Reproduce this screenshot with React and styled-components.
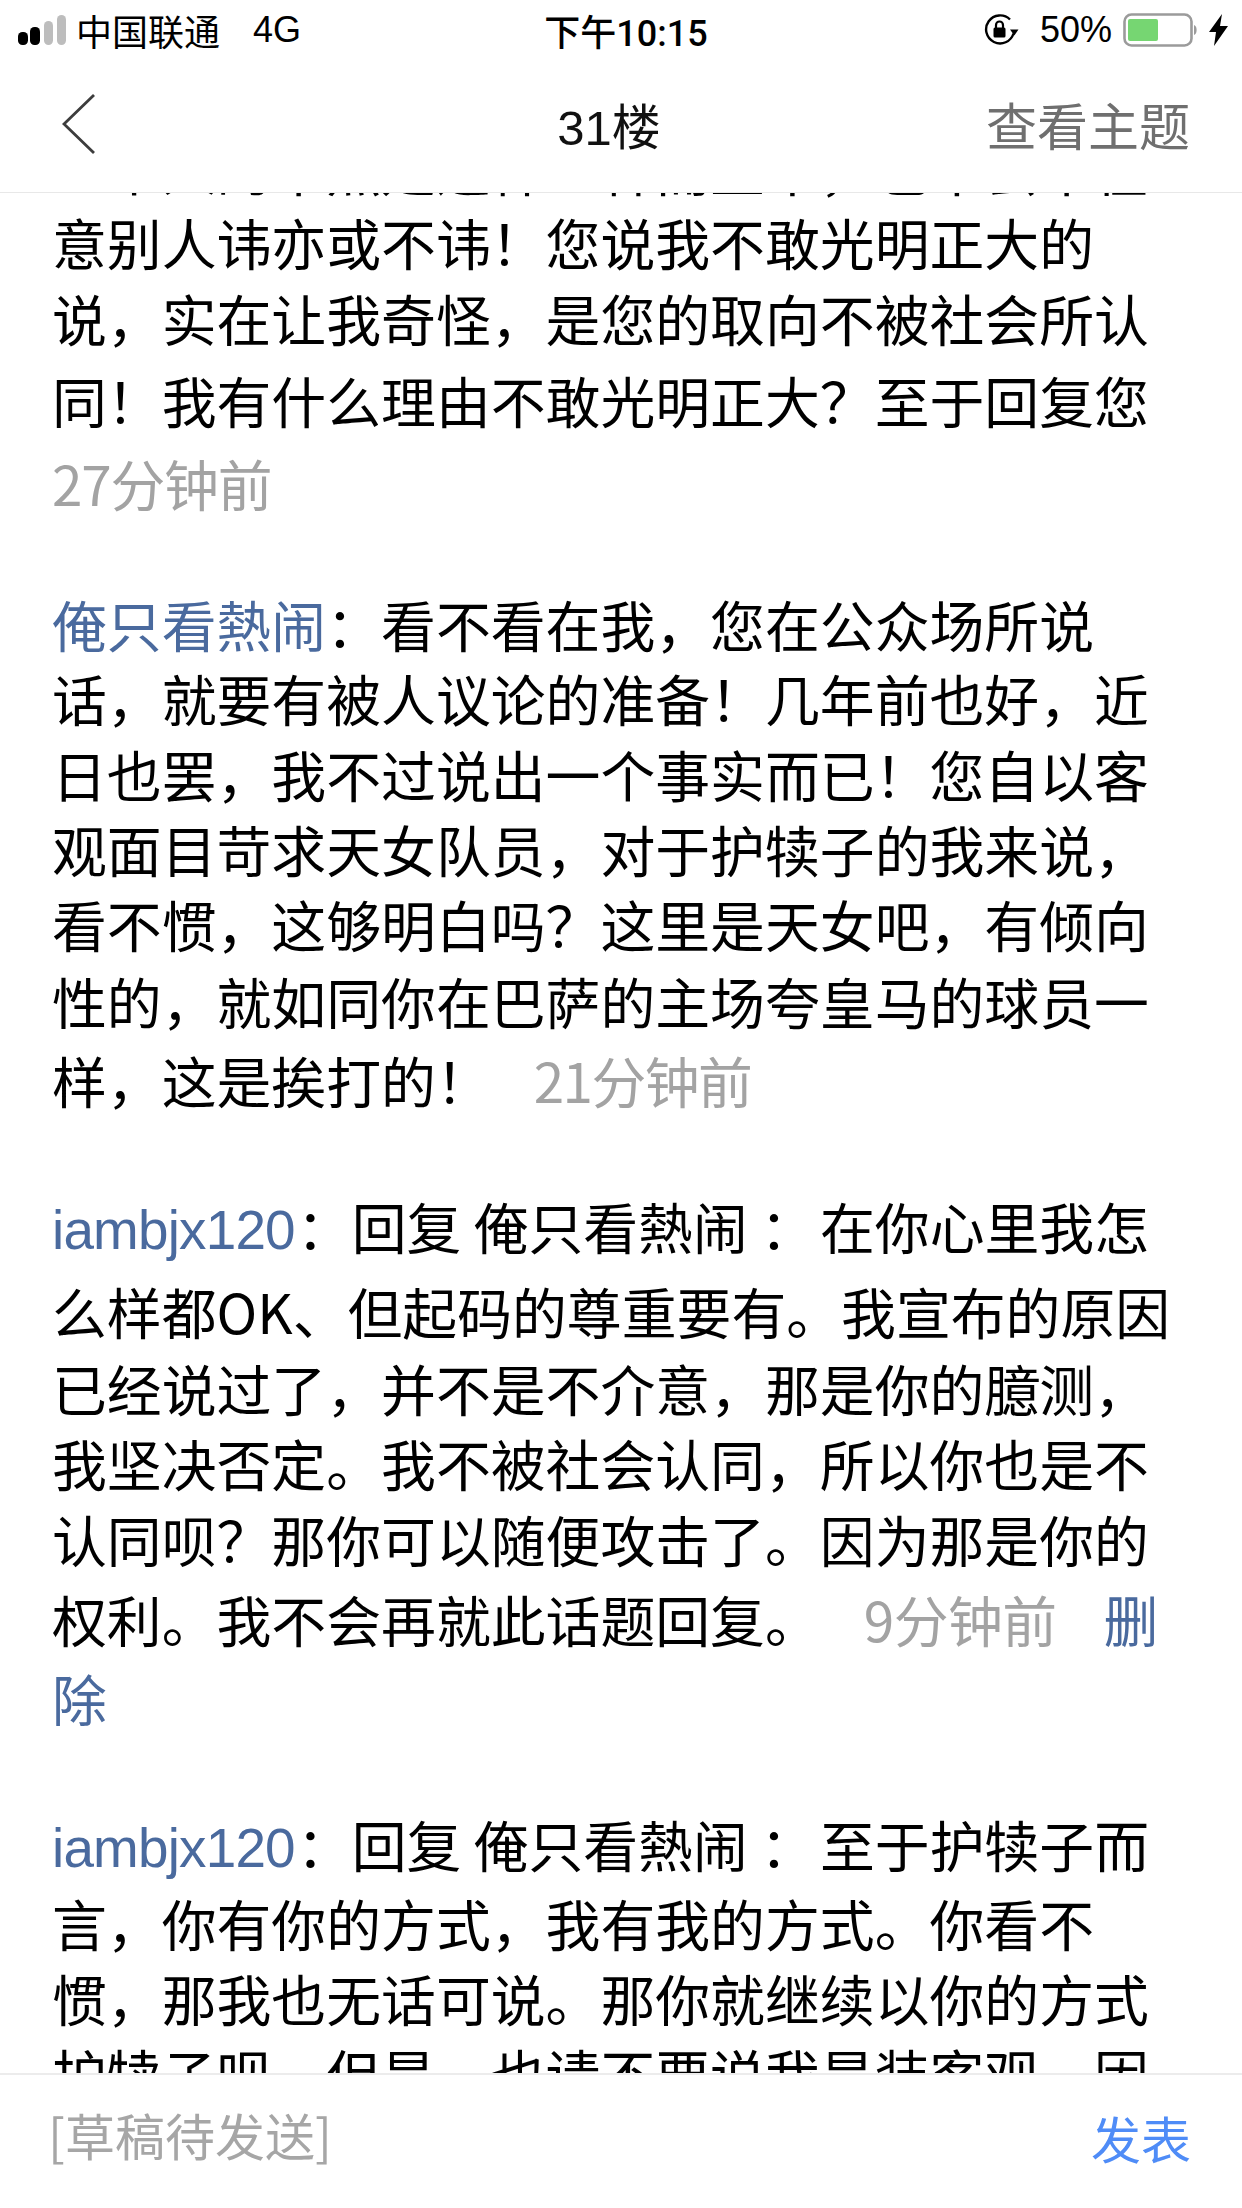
import React from 'react';
import styled, { createGlobalStyle } from 'styled-components';

const CJK = '"Noto Sans CJK SC", "Liberation Sans", sans-serif';
const LATIN = '"Liberation Sans", "Noto Sans CJK SC", sans-serif';

const GlobalStyle = createGlobalStyle`
  html, body {
    margin: 0;
    padding: 0;
    background: #fff;
  }
`;

const Page = styled.div`
  width: 1242px;
  height: 2208px;
  display: flex;
  flex-direction: column;
  overflow: hidden;
  background: #fff;
  color: #000;
  font-family: ${LATIN};
`;

const StatusBar = styled.div`
  height: 60px;
  flex: none;
  display: grid;
  grid-template-columns: 1fr auto 1fr;
  align-items: center;
  padding: 0 14px 0 18px;
  font-size: 36px;
`;

const StatusLeft = styled.div`
  display: flex;
  align-items: center;
  gap: 10px;
`;

const Carrier = styled.span`
  margin-right: 23px;
`;

const StatusRight = styled.div`
  display: flex;
  align-items: center;
  justify-content: flex-end;
`;

const Time = styled.span`
  font-family: Roboto, "Noto Sans CJK SC", sans-serif;
  font-weight: 500;
  margin-left: 6px;
`;

const Percent = styled.span`
  margin: 0 11px 0 21px;
`;

const NavBar = styled.div`
  height: 133px;
  flex: none;
  display: grid;
  grid-template-columns: 1fr auto 1fr;
  align-items: center;
  padding: 0 52px 5px 62px;
  box-sizing: border-box;
  border-bottom: 1px solid #e8e8e8;
`;

const NavTitle = styled.div`
  font-size: 49px;
  color: #111;
  margin-right: 34px;
`;

const NavAction = styled.div`
  justify-self: end;
  font-size: 51px;
  font-family: ${CJK};
  color: #6f6f6f;
`;

const Content = styled.div`
  flex: 1;
  min-height: 0;
  overflow: hidden;
  padding: 0 52px;
`;

const Thread = styled.div`
  margin-top: ${(p) => p.$top}px;
  font-size: 54.85px;
  font-family: ${CJK};
`;

const Line = styled.div`
  height: 76px;
  line-height: 76px;
  margin-top: ${(p) => p.$mt || 0}px;
  white-space: nowrap;
`;

const Author = styled.span`
  font-family: ${(p) => (p.$latin ? LATIN : CJK)};
  letter-spacing: ${(p) => (p.$latin ? '-0.8px' : '0')};
  margin-right: ${(p) => (p.$latin ? '2px' : '0')};
  color: #4a6a9e;
`;

const Mention = styled.span`
  margin-right: 5px;
`;

const Stamp = styled.span`
  color: #a3a3a3;
  letter-spacing: ${(p) => p.$ls ?? -1.2}px;
  margin-left: ${(p) => p.$gap || 0}px;
`;

const Remove = styled.span`
  color: #4a6a9e;
  margin-left: ${(p) => p.$gap || 0}px;
`;

const Footer = styled.div`
  height: 135px;
  flex: none;
  box-sizing: border-box;
  display: flex;
  align-items: center;
  justify-content: space-between;
  padding: 0 51px 10px 48px;
  border-top: 2px solid #ececec;
  font-family: ${CJK};
  font-size: 50px;
`;

const Draft = styled.span`
  color: #a6a6a6;
  margin-bottom: 5px;
`;

const Publish = styled.span`
  color: #4f8cf7;
`;

const Signal = () => (
  <svg width="48" height="30" viewBox="0 0 48 30">
    <rect x="0" y="17" width="10" height="13" rx="4.5" fill="#000" />
    <rect x="12" y="12" width="10" height="18" rx="4.5" fill="#000" />
    <rect x="26" y="6" width="9" height="24" rx="4.5" fill="#bdbdbd" />
    <rect x="39" y="0" width="9" height="30" rx="4.5" fill="#bdbdbd" />
  </svg>
);

const RotationLock = () => (
  <svg width="36" height="32" viewBox="0 0 36 32">
    <path d="M30.5 19.5A14 14 0 1 1 27 5.5" fill="none" stroke="#000" strokeWidth="2.4" />
    <path d="M27 15.5h8.5l-4.2 6z" fill="#000" />
    <rect x="10.5" y="13.5" width="12" height="10" rx="1.5" fill="#000" />
    <path d="M13 14v-3a3.5 3.5 0 0 1 7 0v3" fill="none" stroke="#000" strokeWidth="2.2" />
  </svg>
);

const Battery = () => (
  <svg width="75" height="34" viewBox="0 0 75 34">
    <rect x="1.5" y="1.5" width="67" height="31" rx="7" fill="none" stroke="#9b9b9b" strokeWidth="2.6" />
    <rect x="5" y="6" width="30" height="22" rx="2" fill="#76d672" />
    <path d="M71 12c3.5 1 3.5 9 0 10z" fill="#9b9b9b" />
  </svg>
);

const Bolt = () => (
  <svg width="19" height="32" viewBox="0 0 19 32" style={{ marginLeft: 11 }}>
    <path d="M13 0L0 18h7L5 32 19 12h-8z" fill="#000" />
  </svg>
);

const BackIcon = () => (
  <svg width="33" height="60" viewBox="0 0 33 60">
    <path d="M32 1L2 30l30 29" fill="none" stroke="#3d3d3d" strokeWidth="2.8" />
  </svg>
);

export default function App() {
  return (
    <Page>
      <GlobalStyle />
      <StatusBar>
        <StatusLeft>
          <Signal />
          <Carrier>中国联通</Carrier>
          <span>4G</span>
        </StatusLeft>
        <Time>下午10:15</Time>
        <StatusRight>
          <RotationLock />
          <Percent>50%</Percent>
          <Battery />
          <Bolt />
        </StatusRight>
      </StatusBar>
      <NavBar>
        <BackIcon />
        <NavTitle>31楼</NavTitle>
        <NavAction>查看主题</NavAction>
      </NavBar>
      <Content>
        <Thread $top={-64}>
          <Line>一个人的不然是这样一种而且不，也不会不在</Line>
          <Line $mt={-2}>意别人讳亦或不讳！您说我不敢光明正大的</Line>
          <Line>说，实在让我奇怪，是您的取向不被社会所认</Line>
          <Line $mt={6}>同！我有什么理由不敢光明正大？至于回复您</Line>
          <Line $mt={7}><Stamp>27分钟前</Stamp></Line>
        </Thread>
        <Thread $top={65}>
          <Line><Author>俺只看熱闹</Author>：看不看在我，您在公众场所说</Line>
          <Line $mt={-2}>话，就要有被人议论的准备！几年前也好，近</Line>
          <Line>日也罢，我不过说出一个事实而已！您自以客</Line>
          <Line $mt={-1}>观面目苛求天女队员，对于护犊子的我来说，</Line>
          <Line $mt={-1}>看不惯，这够明白吗？这里是天女吧，有倾向</Line>
          <Line $mt={1}>性的，就如同你在巴萨的主场夸皇马的球员一</Line>
          <Line $mt={3}>样，这是挨打的！<Stamp $gap={43} $ls={-1.6}>21分钟前</Stamp></Line>
        </Thread>
        <Thread $top={70}>
          <Line><Author $latin>iambjx120</Author>：回复 <Mention>俺只看熱闹 ：</Mention>在你心里我怎</Line>
          <Line $mt={9}>么样都OK、但起码的尊重要有。我宣布的原因</Line>
          <Line $mt={1}>已经说过了，并不是不介意，那是你的臆测，</Line>
          <Line $mt={-1}>我坚决否定。我不被社会认同，所以你也是不</Line>
          <Line>认同呗？那你可以随便攻击了。因为那是你的</Line>
          <Line $mt={4}>权利。我不会再就此话题回复。<Stamp $gap={44} $ls={-0.6}>9分钟前</Stamp><Remove $gap={47}>删</Remove></Line>
          <Line $mt={3}><Remove>除</Remove></Line>
        </Thread>
        <Thread $top={70}>
          <Line><Author $latin>iambjx120</Author>：回复 <Mention>俺只看熱闹 ：</Mention>至于护犊子而</Line>
          <Line $mt={3}>言，你有你的方式，我有我的方式。你看不</Line>
          <Line $mt={-1}>惯，那我也无话可说。那你就继续以你的方式</Line>
          <Line $mt={-1}>护犊子呗，但是，也请不要说我是装客观，因</Line>
        </Thread>
      </Content>
      <Footer>
        <Draft>[草稿待发送]</Draft>
        <Publish>发表</Publish>
      </Footer>
    </Page>
  );
}
